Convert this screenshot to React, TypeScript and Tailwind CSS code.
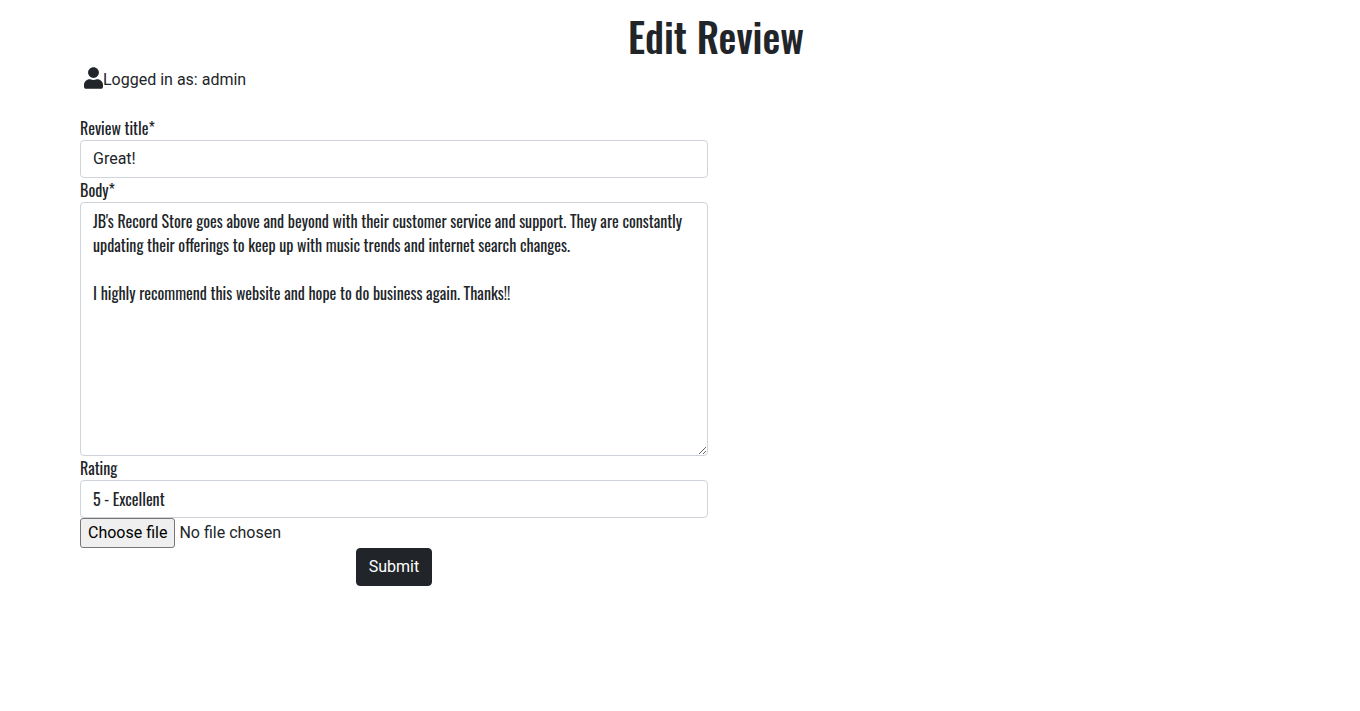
import { useState } from "react";

const condensed = "font-[Oswald,'Liberation_Sans_Narrow','Roboto_Condensed','Roboto',sans-serif]";
const field =
  "block w-full rounded border border-[#ced4da] bg-white px-3 py-1.5 text-base text-[#212529] focus:outline-2 focus:outline-blue-300";

const initialBody = `JB's Record Store goes above and beyond with their customer service and support. They are constantly updating their offerings to keep up with music trends and internet search changes.

I highly recommend this website and hope to do business again. Thanks!!`;

function UserIcon() {
  return (
    <svg viewBox="0 0 448 512" className="h-[22px] w-[19px]" fill="currentColor" aria-hidden="true">
      <path d="M224 256c70.7 0 128-57.3 128-128S294.7 0 224 0 96 57.3 96 128s57.3 128 128 128zm89.6 32h-16.7c-22.2 10.2-46.9 16-72.9 16s-50.6-5.8-72.9-16h-16.7C60.2 288 0 348.2 0 422.4V464c0 26.5 21.5 48 48 48h352c26.5 0 48-21.5 48-48v-41.6c0-74.2-60.2-134.4-134.4-134.4z" />
    </svg>
  );
}

export default function App() {
  const [title, setTitle] = useState("Great!");
  const [body, setBody] = useState(initialBody);
  const [fileName, setFileName] = useState("");

  return (
    <main className="min-h-screen bg-white pl-[72px] pt-3 font-[Roboto,sans-serif] text-base text-[#212529]">
      <h1 className={`${condensed} text-center text-[40px] leading-12 font-medium`}>Edit Review</h1>
      <p className="flex items-start px-3 pt-[7px] leading-[26px]">
        <UserIcon />
        <span>Logged in as: admin</span>
      </p>
      <div className="grid grid-cols-2 pt-[23px]">
        <form className="flex flex-col px-2" onSubmit={(e) => e.preventDefault()}>
          <label htmlFor="title" className={condensed}>Review title*</label>
          <input id="title" type="text" required value={title} onChange={(e) => setTitle(e.target.value)} className={field} />
          <label htmlFor="body" className={condensed}>Body*</label>
          <textarea
            id="body"
            rows={10}
            required
            value={body}
            onChange={(e) => setBody(e.target.value)}
            className={`${field} ${condensed} resize-y`}
          />
          <label htmlFor="rating" className={condensed}>Rating</label>
          <select id="rating" defaultValue="5" className={`${field} ${condensed} appearance-none`}>
            <option value="1">1 - Terrible</option>
            <option value="2">2 - Poor</option>
            <option value="3">3 - Average</option>
            <option value="4">4 - Good</option>
            <option value="5">5 - Excellent</option>
          </select>
          <div className="relative flex">
            <input
              id="image"
              type="file"
              className="peer sr-only"
              onChange={(e) => setFileName(e.target.files?.[0]?.name ?? "")}
            />
            <label htmlFor="image" className="flex items-center gap-1 peer-focus-visible:outline-2">
              <span className="rounded-[3px] border border-[#767676] bg-[#efefef] px-[7px] py-0.5 text-black">
                Choose file
              </span>
              <span>{fileName || "No file chosen"}</span>
            </label>
          </div>
          <button type="submit" className="self-center rounded border border-[#212529] bg-[#212529] px-3 py-1.5 text-white">
            Submit
          </button>
        </form>
      </div>
    </main>
  );
}
